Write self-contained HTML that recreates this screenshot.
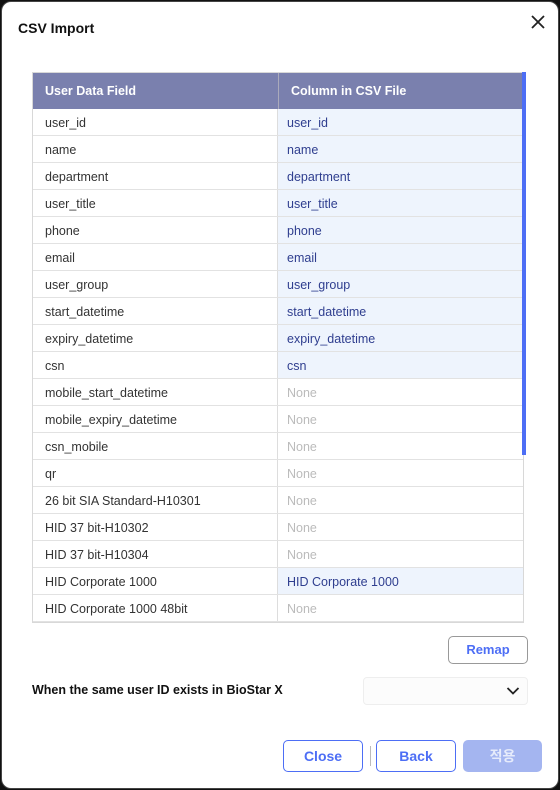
<!DOCTYPE html>
<html><head><meta charset="utf-8"><style>
*{box-sizing:border-box;margin:0;padding:0}
body{width:560px;height:790px;background:#111;font-family:"Liberation Sans","Noto Sans CJK KR",sans-serif;overflow:hidden;position:relative}
.dlg{position:absolute;left:1px;top:1px;width:558px;height:788px;background:#fff;border-radius:10px;border:1px solid #444}
.title{position:absolute;left:18px;top:20px;font-size:14px;font-weight:bold;color:#111}
.x{position:absolute;left:530px;top:14px}
.tbl{position:absolute;left:32px;top:72px;width:492px;height:551px;border:1px solid #d8d8d8;overflow:hidden}
.hd{height:36px;background:#7a80ae;color:#fff;font-weight:bold;font-size:12.5px;display:flex}
.hd div{line-height:37px;padding-left:12px}
.row{height:27px;display:flex;border-bottom:1px solid #e2e2e2;font-size:12.5px}
.c1{width:245px;padding-left:12px;line-height:28px;color:#333;border-right:1px solid #ddd}
.c2{flex:1;padding-left:9px;line-height:28px;color:#bbb}
.c2.s{background:#eef4fd;color:#2f3e8f}
.sb{position:absolute;left:522px;top:72px;width:4px;height:383px;background:#4d6ef5}
.btn{position:absolute;border:1px solid #4d6ef5;border-radius:5px;color:#4d6ef5;font-weight:bold;font-size:14px;text-align:center;background:#fff}
</style></head><body>
<div class="dlg"></div>
<div class="title">CSV Import</div>
<svg class="x" width="16" height="16" viewBox="0 0 16 16"><path d="M2 2L14 14M14 2L2 14" stroke="#222" stroke-width="1.8"/></svg>
<div class="tbl">
<div class="hd"><div style="width:246px;border-right:1px solid #aab">User Data Field</div><div>Column in CSV File</div></div>
<div class="row"><div class="c1">user_id</div><div class="c2 s">user_id</div></div>
<div class="row"><div class="c1">name</div><div class="c2 s">name</div></div>
<div class="row"><div class="c1">department</div><div class="c2 s">department</div></div>
<div class="row"><div class="c1">user_title</div><div class="c2 s">user_title</div></div>
<div class="row"><div class="c1">phone</div><div class="c2 s">phone</div></div>
<div class="row"><div class="c1">email</div><div class="c2 s">email</div></div>
<div class="row"><div class="c1">user_group</div><div class="c2 s">user_group</div></div>
<div class="row"><div class="c1">start_datetime</div><div class="c2 s">start_datetime</div></div>
<div class="row"><div class="c1">expiry_datetime</div><div class="c2 s">expiry_datetime</div></div>
<div class="row"><div class="c1">csn</div><div class="c2 s">csn</div></div>
<div class="row"><div class="c1">mobile_start_datetime</div><div class="c2">None</div></div>
<div class="row"><div class="c1">mobile_expiry_datetime</div><div class="c2">None</div></div>
<div class="row"><div class="c1">csn_mobile</div><div class="c2">None</div></div>
<div class="row"><div class="c1">qr</div><div class="c2">None</div></div>
<div class="row"><div class="c1">26 bit SIA Standard-H10301</div><div class="c2">None</div></div>
<div class="row"><div class="c1">HID 37 bit-H10302</div><div class="c2">None</div></div>
<div class="row"><div class="c1">HID 37 bit-H10304</div><div class="c2">None</div></div>
<div class="row"><div class="c1">HID Corporate 1000</div><div class="c2 s">HID Corporate 1000</div></div>
<div class="row"><div class="c1">HID Corporate 1000 48bit</div><div class="c2">None</div></div>
</div>
<div class="sb"></div>
<div class="btn" style="left:448px;top:636px;width:80px;height:28px;line-height:26px;border-color:#999;font-size:13px">Remap</div>
<div style="position:absolute;left:32px;top:683px;font-size:12.5px;font-weight:bold;color:#111">When the same user ID exists in BioStar X</div>
<div style="position:absolute;left:363px;top:677px;width:165px;height:28px;border:1px solid #eee;border-radius:4px;background:#fcfcfc"></div>
<svg style="position:absolute;left:506px;top:686px" width="14" height="10" viewBox="0 0 14 10"><path d="M1.5 2L7 7.5L12.5 2" stroke="#222" stroke-width="1.8" fill="none"/></svg>
<div class="btn" style="left:283px;top:740px;width:80px;height:32px;line-height:30px">Close</div>
<div style="position:absolute;left:370px;top:746px;width:1px;height:20px;background:#bbb"></div>
<div class="btn" style="left:376px;top:740px;width:80px;height:32px;line-height:30px">Back</div>
<div class="btn" style="left:463px;top:740px;width:79px;height:32px;line-height:30px;background:#a4b5f0;border-color:#a4b5f0;color:#e6ebfb">적용</div>
</body></html>
